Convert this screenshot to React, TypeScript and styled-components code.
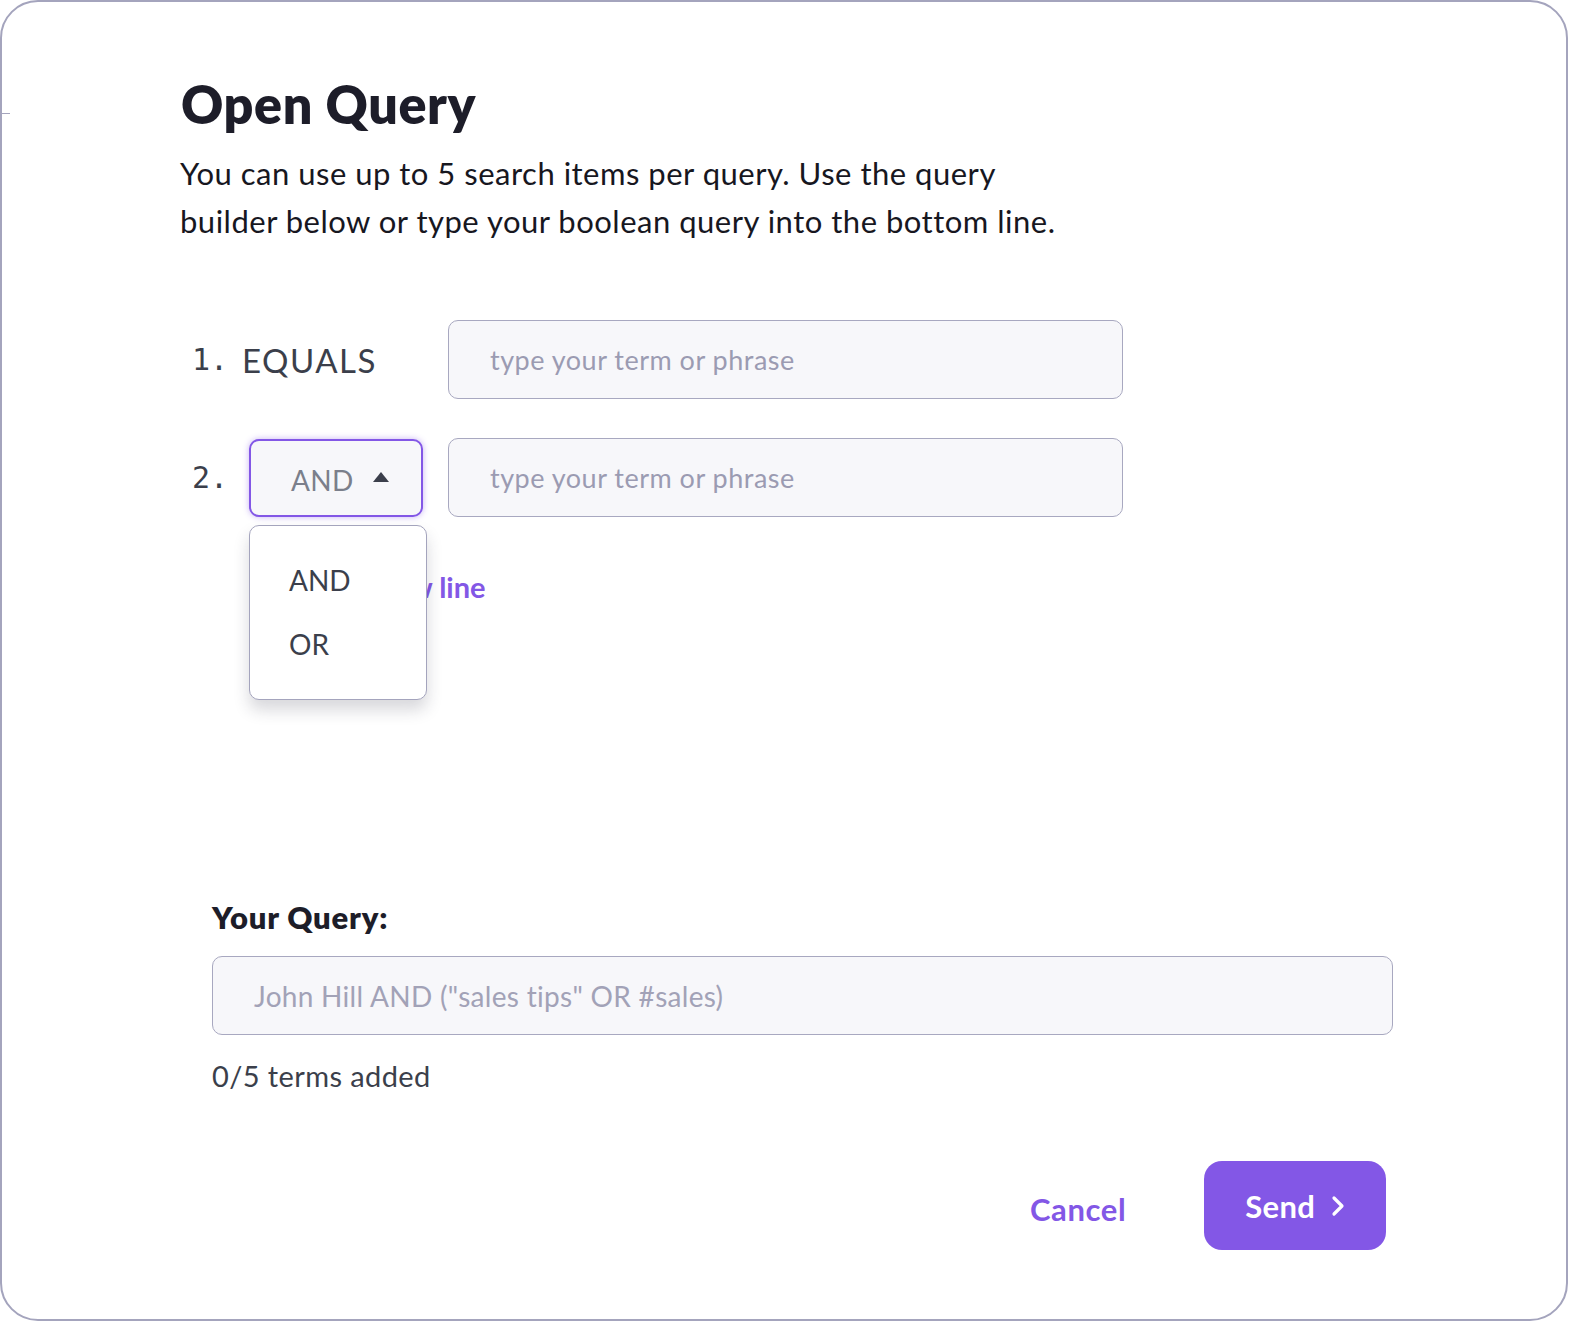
import React from "react";
import styled, { createGlobalStyle } from "styled-components";

const Global = createGlobalStyle`
  html, body { margin: 0; padding: 0; background: #ffffff; }
  body { font-family: Lato, "Noto Sans", sans-serif; }
  * { box-sizing: border-box; }
`;

const Card = styled.div`
  position: relative;
  width: 1568px;
  height: 1321px;
  border: 2px solid #a4a4bd;
  border-radius: 38px;
  background: #ffffff;
  padding: 72px 0 0 178px;
  display: flex;
  flex-direction: column;
  &::before {
    content: "";
    position: absolute;
    left: -2px;
    top: 111px;
    width: 10px;
    height: 1px;
    background: #a4a4bd;
  }
`;

const Title = styled.h1`
  margin: 0 0 0 1px;
  font-size: 52px;
  line-height: 60px;
  font-weight: 800;
  color: #1d1d29;
  letter-spacing: 0.6px;
`;

const Intro = styled.p`
  margin: 15px 0 0 0;
  width: 900px;
  font-size: 31px;
  line-height: 48px;
  letter-spacing: 0.5px;
  color: #17171f;
`;

const Rows = styled.div`
  margin-top: 75px;
  margin-left: 12px;
  display: flex;
  flex-direction: column;
  gap: 39px;
  position: relative;
`;

const Row = styled.div`
  display: flex;
  align-items: center;
`;

const Num = styled.span`
  font-family: "DejaVu Sans Mono", "Liberation Mono", monospace;
  font-size: 30px;
  color: #3b3f4b;
  width: 50px;
  flex: none;
`;

const Label = styled.span`
  font-size: 33px;
  color: #3b3f4b;
  letter-spacing: 1.5px;
  width: 206px;
  flex: none;
`;

const Input = styled.div`
  width: 675px;
  height: 79px;
  border: 1px solid #a8a8c0;
  border-radius: 10px;
  background: #f7f7fa;
  display: flex;
  align-items: center;
  padding-left: 41px;
  font-size: 27px;
  letter-spacing: 0.5px;
  color: #9b9bb2;
`;

const SelectWrap = styled.div`
  position: relative;
  width: 206px;
  flex: none;
`;

const Select = styled.div`
  width: 174px;
  height: 78px;
  margin-left: 7px;
  border: 2px solid #8357e6;
  border-radius: 10px;
  background: #f7f7fa;
  box-shadow: 0 0 6px rgba(131, 87, 230, 0.45);
  display: flex;
  align-items: center;
  padding: 5px 0 0 40px;
  gap: 18px;
  font-size: 28px;
  color: #7b7f8b;
  letter-spacing: 0.3px;
  svg { margin-top: -6px; }
`;

const Menu = styled.div`
  position: absolute;
  top: 86px;
  left: 7px;
  width: 178px;
  height: 175px;
  background: #ffffff;
  border: 1px solid #a4a4bd;
  border-radius: 10px;
  box-shadow: 0 10px 16px rgba(40, 40, 60, 0.18);
  display: flex;
  flex-direction: column;
  padding: 36px 0 0 39px;
  gap: 28px;
  z-index: 2;
`;

const MenuItem = styled.div`
  font-size: 28px;
  line-height: 36px;
  color: #3b3f4b;
`;

const AddLine = styled.div`
  margin: 39px 0 0 138px;
  font-size: 29px;
  font-weight: 700;
  color: #8357e6;
  display: flex;
  align-items: center;
  height: 60px;
`;

const QuerySection = styled.div`
  margin-top: 282px;
  margin-left: 32px;
  display: flex;
  flex-direction: column;
`;

const QueryTitle = styled.div`
  font-size: 31px;
  font-weight: 800;
  letter-spacing: 0.8px;
  color: #1d1d29;
`;

const QueryInput = styled(Input)`
  width: 1181px;
  margin-top: 20px;
  font-size: 28px;
  letter-spacing: 0.3px;
  color: #a2a2b7;
`;

const Count = styled.div`
  margin-top: 23px;
  font-size: 29px;
  color: #3b3f4b;
  letter-spacing: 0.4px;
`;

const Actions = styled.div`
  margin-top: 68px;
  margin-left: 850px;
  display: flex;
  align-items: center;
  gap: 78px;
`;

const Cancel = styled.button`
  border: none;
  background: none;
  padding: 0;
  margin-top: 6px;
  font-family: inherit;
  font-size: 31px;
  font-weight: 700;
  letter-spacing: 0.6px;
  color: #8357e6;
`;

const Send = styled.button`
  width: 182px;
  height: 89px;
  border: none;
  border-radius: 18px;
  background: #8357e6;
  color: #ffffff;
  font-family: inherit;
  font-size: 31px;
  font-weight: 700;
  letter-spacing: 0.4px;
  display: flex;
  align-items: center;
  justify-content: center;
  gap: 16px;
`;

export default function App() {
  return (
    <>
      <Global />
      <Card>
        <Title>Open Query</Title>
        <Intro>
          You can use up to 5 search items per query. Use the query builder below or type your boolean query into the bottom line.
        </Intro>
        <Rows>
          <Row>
            <Num>1.</Num>
            <Label>EQUALS</Label>
            <Input>type your term or phrase</Input>
          </Row>
          <Row>
            <Num>2.</Num>
            <SelectWrap>
              <Select>
                AND
                <svg width="18" height="12" viewBox="0 0 18 12">
                  <path d="M9 1 L17 11 L1 11 Z" fill="#3b3f4b" />
                </svg>
              </Select>
              <Menu>
                <MenuItem>AND</MenuItem>
                <MenuItem>OR</MenuItem>
              </Menu>
            </SelectWrap>
            <Input>type your term or phrase</Input>
          </Row>
        </Rows>
        <AddLine>Add new line</AddLine>
        <QuerySection>
          <QueryTitle>Your Query:</QueryTitle>
          <QueryInput>John Hill AND ("sales tips" OR #sales)</QueryInput>
          <Count>0/5 terms added</Count>
        </QuerySection>
        <Actions>
          <Cancel>Cancel</Cancel>
          <Send>
            Send
            <svg width="14" height="22" viewBox="0 0 14 22">
              <path d="M3 3 L11 11 L3 19" stroke="#fff" strokeWidth="3.2" fill="none" strokeLinecap="round" strokeLinejoin="round" />
            </svg>
          </Send>
        </Actions>
      </Card>
    </>
  );
}
